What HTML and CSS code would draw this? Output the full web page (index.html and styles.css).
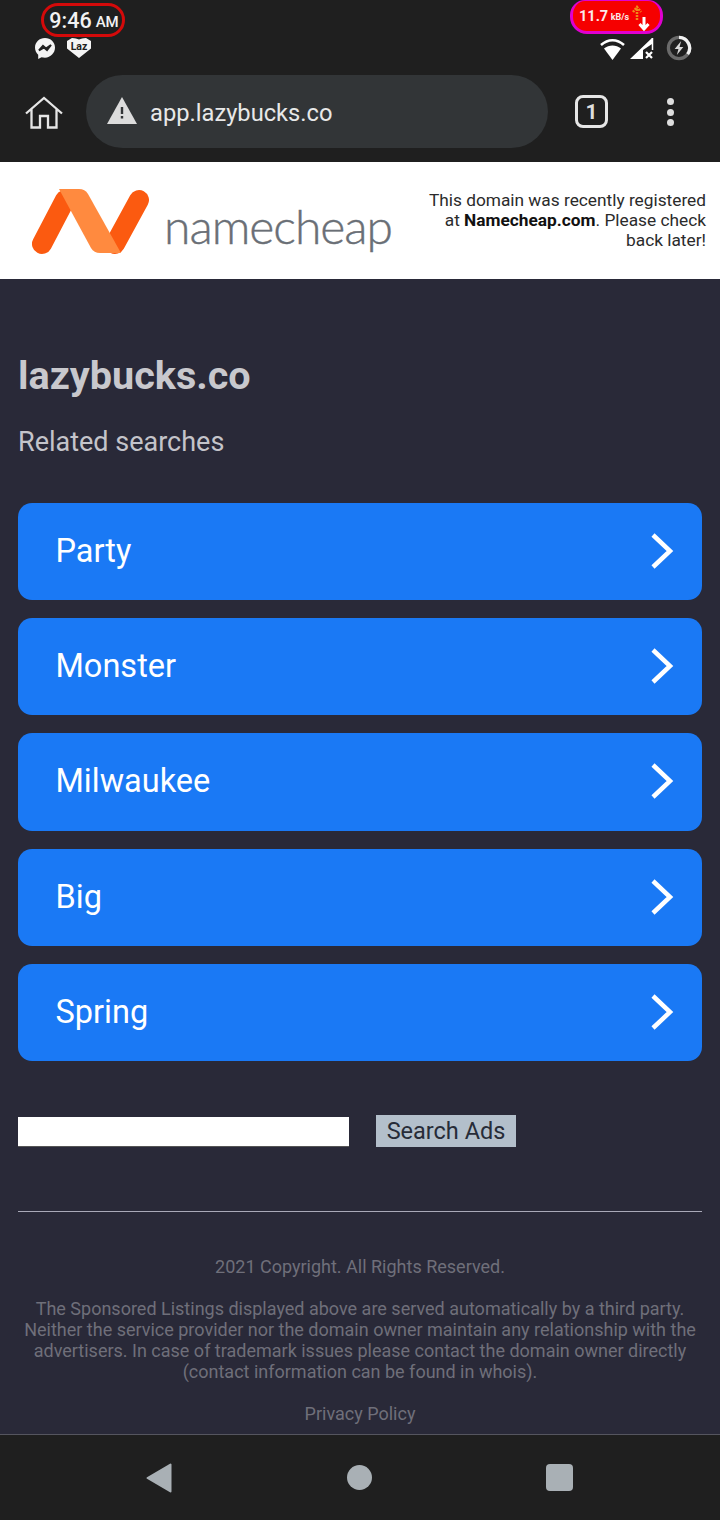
FILE: index.html
```html
<!DOCTYPE html>
<html lang="en">
<head>
<meta charset="utf-8">
<title>lazybucks.co</title>
<link rel="stylesheet" href="styles.css">
</head>
<body>
<div class="screen">
  <header class="chrome">
    <div class="status">
      <div class="status-left">
        <div class="time"><span class="clock">9:46</span> <span class="ampm">AM</span></div>
        <div class="notifs">
          <svg class="ic-msg" viewBox="0 0 20 22"><path fill="#f4f4f4" d="M10 0C4.400 0 0 4.100 0 9.600c0 2.900 1.200 5.400 3.200 7.100V21l3.300-1.800c1.100.3 2.300.5 3.500.5 5.600 0 10-4.600 10-10.100S15.600 0 10 0z"/><path fill="none" stroke="#202020" stroke-width="2" d="M4 12.500l4-4.500 3 2.500 5-3.500-4 5-3-2.500z"/></svg>
          <svg class="ic-laz" viewBox="0 0 24 20"><path fill="#f4f4f4" d="M5 0c3 0 5 .8 7 1.500C14 .8 16 0 19 0l5 3v7.500L12 20 0 10.500V3z"/><text x="12" y="11.500" class="laz-text">Laz</text></svg>
        </div>
      </div>
      <div class="status-right">
        <div class="speed"><span class="speed-num">11.7</span><span class="speed-unit">kB/s</span>
          <svg class="ic-arrows" viewBox="0 0 20 28"><path fill="none" stroke="#f08a18" stroke-width="2.500" stroke-dasharray="2 1" d="M6 15V3M2 7l4-5 4 5"/><path fill="none" stroke="#fff" stroke-width="3" d="M13 12v12M8.500 19l4.500 5 4.500-5"/></svg>
        </div>
        <div class="sys">
          <svg class="ic-wifi" viewBox="0 0 27 23"><path fill="none" stroke="#fff" stroke-width="2.500" d="M2 8c7-6.500 16-6.500 23 0"/><path fill="#fff" d="M13.500 23L5 11.500c5-4 12-4 17 0z"/></svg>
          <svg class="ic-signal" viewBox="0 0 24 24"><path fill="none" stroke="#fff" stroke-width="1.500" d="M22.500 2v12"/><path fill="#fff" d="M0 23L22 2v6L13 14v9z"/><path stroke="#fff" stroke-width="2.200" d="M16 16l6 6m0-6l-6 6"/></svg>
          <svg class="ic-batt" viewBox="0 0 24 24"><circle cx="12" cy="12" r="9.800" fill="none" stroke="#6a6a6a" stroke-width="3"/><path fill="none" stroke="#f2f2f2" stroke-width="3" d="M12 2.200a9.800 9.800 0 0 1 8 15.500"/><path fill="#d8d8d8" d="M14 5.500L8 13h3.500l-1.500 5.500 6-7.500h-3.500z"/></svg>
        </div>
      </div>
    </div>
    <div class="toolbar">
      <svg class="ic-home" viewBox="0 0 38 33"><path fill="none" stroke="#e6e6e6" stroke-width="2.300" d="M1 17.500L19 2l18 15.500M6.500 13v18.500h8.500V20h8v11.500h8.500V13"/></svg>
      <div class="url">
        <svg class="ic-warn" viewBox="0 0 30 27"><path fill="#dcdcdc" d="M15 0l15 27H0z"/><path fill="#323537" d="M13.800 10h2.400v7h-2.400zM13.800 19h2.400v2.500h-2.400z"/></svg>
        <span class="url-text">app.lazybucks.co</span>
      </div>
      <div class="tabs">1</div>
      <div class="menu"><i></i><i></i><i></i></div>
    </div>
  </header>

  <div class="banner">
    <div class="brand">
      <svg class="nc-mark" viewBox="0 0 120 68">
        <path fill="none" stroke="#fb5a10" stroke-width="20" stroke-linecap="round" d="M12 57L35 13"/>
        <path fill="none" stroke="#fb5a10" stroke-width="20" stroke-linecap="round" d="M109 13L85 57"/>
        <path fill="#ff8a3f" d="M29 2h20c4 0 7 1.500 9 5l33 59H70c-4 0-7-1.500-9-5z"/>
      </svg>
      <span class="nc-word">namecheap</span>
    </div>
    <p class="banner-note"><span class="note-line">This domain was recently registered</span><span class="note-line">at <b>Namecheap.com</b>. Please check</span><span class="note-line">back later!</span></p>
  </div>

  <main class="page">
    <h1>lazybucks.co</h1>
    <h2>Related searches</h2>
    <nav class="links">
      <a class="link">Party<svg class="chev" viewBox="0 0 24 38"><path d="M3 3l17 16L3 35"/></svg></a>
      <a class="link">Monster<svg class="chev" viewBox="0 0 24 38"><path d="M3 3l17 16L3 35"/></svg></a>
      <a class="link">Milwaukee<svg class="chev" viewBox="0 0 24 38"><path d="M3 3l17 16L3 35"/></svg></a>
      <a class="link">Big<svg class="chev" viewBox="0 0 24 38"><path d="M3 3l17 16L3 35"/></svg></a>
      <a class="link">Spring<svg class="chev" viewBox="0 0 24 38"><path d="M3 3l17 16L3 35"/></svg></a>
    </nav>
    <form class="search">
      <input class="search-input" type="text" aria-label="Search">
      <button class="search-btn" type="button">Search Ads</button>
    </form>
    <footer class="foot">
      <p class="copy">2021 Copyright. All Rights Reserved.</p>
      <p class="legal">The Sponsored Listings displayed above are served automatically by a third party. Neither the service provider nor the domain owner maintain any relationship with the advertisers. In case of trademark issues please contact the domain owner directly (contact information can be found in whois).</p>
      <p class="privacy">Privacy Policy</p>
    </footer>
  </main>

  <div class="navbar">
    <svg class="nav-back" viewBox="0 0 26 30"><path fill="#a9b0b5" stroke="#a9b0b5" stroke-width="2" stroke-linejoin="round" d="M1.500 15L24.500 1.500v27z"/></svg>
    <span class="nav-home"></span>
    <span class="nav-recent"></span>
  </div>
</div>
</body>
</html>
```
FILE: styles.css
```css
* { box-sizing: border-box; }
html, body { margin: 0; padding: 0; }
body { font-family: Roboto, "Liberation Sans", sans-serif; background: #292938; }
.screen { width: 720px; height: 1520px; display: flex; flex-direction: column; overflow: hidden; }

.chrome { background: #1f1f1f; height: 162px; flex: none; }
.status { height: 70px; display: flex; justify-content: space-between; padding: 0 28px 0 33px; }
.status-left { display: flex; flex-direction: column; align-items: flex-start; }
.time { margin: 3px 0 0 8px; width: 84px; height: 34px; border: 3px solid #d40a0a; border-radius: 17px; color: #f2f2f2; display: flex; align-items: center; justify-content: center; gap: 4px; white-space: nowrap; padding-left: 2px; }
.clock { font-size: 21.500px; font-weight: 500; }
.ampm { font-size: 15px; font-weight: 500; padding-top: 3px; }
.notifs { display: flex; align-items: center; gap: 12px; margin: 1px 0 0 2px; }
.ic-msg { width: 20px; height: 22px; display: block; }
.ic-laz { width: 24px; height: 20px; display: block; margin-top: -2px; }
.laz-text { font-family: Roboto, sans-serif; font-size: 10.500px; font-weight: 700; fill: #202020; text-anchor: middle; }

.status-right { display: flex; flex-direction: column; align-items: flex-end; }
.speed { margin-right: 29px; width: 93px; height: 34px; background: #f60000; border: 3px solid #e000d0; border-top-width: 1px; border-radius: 15px 15px 17px 17px; color: #fbeaea; display: flex; align-items: center; padding-left: 6px; }
.speed-num { font-size: 14.500px; font-weight: 700; }
.speed-unit { font-size: 9px; font-weight: 700; margin-left: 2.500px; padding-top: 2px; }
.ic-arrows { width: 20px; height: 28px; margin: 6px 0 0 2px; }
.sys { display: flex; align-items: center; margin-top: 1px; }
.ic-wifi { width: 27px; height: 23px; }
.ic-signal { width: 24px; height: 24px; margin-left: 4px; }
.ic-batt { width: 26px; height: 26px; margin-left: 12px; }

.toolbar { height: 92px; display: flex; align-items: flex-start; padding: 5px 0 0 25px; }
.ic-home { width: 38px; height: 33px; margin-top: 21px; flex: none; }
.url { margin-left: 23px; width: 462px; height: 73px; border-radius: 37px; background: #323537; display: flex; align-items: center; padding-left: 21px; flex: none; }
.ic-warn { width: 30px; height: 27px; flex: none; margin-top: -3px; }
.url-text { margin-left: 13px; font-size: 23.700px; color: #e8e8e8; padding-top: 2px; }
.tabs { margin: 20px 0 0 27px; width: 33px; height: 33px; border: 3.500px solid #e6e6e6; border-radius: 8px; color: #dedede; font-size: 21px; font-weight: 700; display: flex; align-items: center; justify-content: center; flex: none; }
.menu { margin: 23px 0 0 59px; display: flex; flex-direction: column; gap: 3.500px; flex: none; }
.menu i { display: block; width: 7px; height: 7px; border-radius: 50%; background: #dedede; }

.banner { height: 117px; flex: none; background: #fff; display: flex; align-items: center; justify-content: space-between; padding: 0 14px 0 30px; }
.brand { display: flex; align-items: flex-start; }
.nc-mark { width: 120px; height: 68px; flex: none; margin-top: 1px; }
.nc-word { margin: 10px 0 0 14px; font-family: Lato, sans-serif; font-weight: 300; font-size: 48px; line-height: 60px; letter-spacing: -1px; color: #6a6f76; -webkit-text-stroke: 0.4px #6a6f76; }
.banner-note { margin: 0 0 2px; width: 290px; text-align: right; font-size: 17.300px; line-height: 20px; color: #2b2b2b; }
.note-line { display: block; white-space: nowrap; }
.banner-note b { color: #111; font-weight: 700; }

.page { flex: 1; background: #292938; padding: 76px 18px 0; overflow: hidden; }
h1 { margin: 0; font-size: 39.600px; line-height: 42px; font-weight: 700; color: #c8c8cd; }
h2 { margin: 29px 0 0; font-size: 27px; line-height: 32px; font-weight: 400; color: #c4c4ca; }
.links { margin-top: 45px; display: flex; flex-direction: column; gap: 18px; }
.link { height: 97.200px; border-radius: 14px; background: #1a79f5; color: #fff; font-size: 32.500px; padding: 0 28px 1px 37.500px; display: flex; align-items: center; justify-content: space-between; }
.chev { width: 24px; height: 38px; flex: none; }
.chev path { fill: none; stroke: #fff; stroke-width: 4.500; }

.search { margin-top: 54px; display: flex; align-items: center; }
.search-input { width: 331px; height: 30px; margin-top: 2px; border: 0; border-bottom: 1px solid #555; background: #fff; padding: 0; border-radius: 0; }
.search-btn { margin-left: 27px; width: 140px; height: 32px; border: 0; padding: 0; background: #b3bfcb; color: #272c38; font-family: Roboto, sans-serif; font-size: 23.500px; }

.foot { margin-top: 64px; border-top: 1px solid #a9a9b8; text-align: center; color: #6f6f7a; font-size: 18px; line-height: 21px; }
.foot p { margin: 0; }
.foot .copy { padding-top: 44px; }
.foot .legal { margin-top: 21px; padding: 0 2px; }
.foot .privacy { margin-top: 21px; }

.navbar { height: 86px; flex: none; background: #1f1f1f; border-top: 1px solid #55555f; display: grid; grid-template-columns: 26px 25px 27px; justify-content: space-between; align-items: center; padding: 0 147px 0 146px; }
.nav-back { width: 26px; height: 30px; display: block; }
.nav-home { width: 25px; height: 25px; border-radius: 50%; background: #a9b0b5; }
.nav-recent { width: 27px; height: 27px; border-radius: 4px; background: #a9b0b5; }
```
